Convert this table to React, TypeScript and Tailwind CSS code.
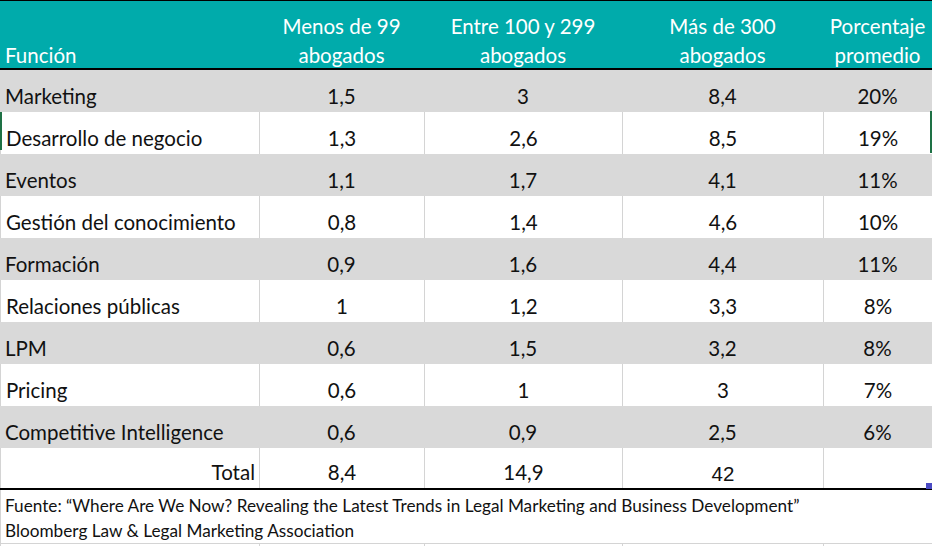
import React from 'react';

const rows = [
  ['Marketing', '1,5', '3', '8,4', '20%'],
  ['Desarrollo de negocio', '1,3', '2,6', '8,5', '19%'],
  ['Eventos', '1,1', '1,7', '4,1', '11%'],
  ['Gestión del conocimiento', '0,8', '1,4', '4,6', '10%'],
  ['Formación', '0,9', '1,6', '4,4', '11%'],
  ['Relaciones públicas', '1', '1,2', '3,3', '8%'],
  ['LPM', '0,6', '1,5', '3,2', '8%'],
  ['Pricing', '0,6', '1', '3', '7%'],
  ['Competitive Intelligence', '0,6', '0,9', '2,5', '6%'],
];

const cols = 'grid grid-cols-[259px_165px_198px_201px_109px]';

export default function App() {
  return (
    <div className="relative w-[932px] h-[546px] overflow-hidden bg-white text-[#111] font-['Lato','Open_Sans',sans-serif]">
      {/* header */}
      <div className={`${cols} h-[70px] bg-[#00abab] text-white text-[20.5px] leading-[29px] border-t border-black border-b-2 border-b-black`}>
        <div className="pl-[5px] pt-[40px]">Función</div>
        <div className="pt-[11px] text-center">Menos de 99<br />abogados</div>
        <div className="pt-[11px] text-center">Entre 100 y 299<br />abogados</div>
        <div className="pt-[11px] text-center">Más de 300<br />abogados</div>
        <div className="pt-[11px] text-center">Porcentaje<br />promedio</div>
      </div>

      {rows.map((r, i) => {
        const gray = i % 2 === 0;
        return (
          <div key={r[0]} className={`${cols} h-[42px] text-[20.5px] leading-[24px] ${gray ? 'bg-[#d9d9d9]' : 'bg-white'}`}>
            {r.map((c, j) => (
              <div
                key={j}
                className={`flex items-end pb-[4px] ${j === 0 ? 'justify-start pl-[5px]' : 'justify-center'} ${gray ? '' : 'border-l border-[#d4d4d4]'}`}
              >
                {c}
              </div>
            ))}
          </div>
        );
      })}

      {/* total */}
      <div className={`${cols} h-[42px] text-[20.5px] leading-[24px] border-b-2 border-black`}>
        <div className="flex items-end justify-end pr-[4px] pb-[4px] border-l border-[#d4d4d4]">Total</div>
        <div className="flex items-end justify-center pb-[4px] border-l border-[#d4d4d4]">8,4</div>
        <div className="flex items-end justify-center pb-[4px] border-l border-[#d4d4d4]">14,9</div>
        <div className="flex items-end justify-center pb-[2px] border-l border-[#d4d4d4] font-['Liberation_Sans',sans-serif] text-[20.5px]">42</div>
        <div className="border-l border-[#d4d4d4]"></div>
      </div>

      {/* footer */}
      <div className="h-[54px] border-l border-b border-[#d4d4d4] pl-[4px] pt-[3px] text-[17.2px] leading-[25px]">
        <div>
          Fuente: “Where Are We Now? Revealing the Latest Trends in Legal Marketing and Business Development”
        </div>
        <div>Bloomberg Law &amp; Legal Marketing Association</div>
      </div>
      <div className={`${cols} h-[10px]`}>
        <div className="border-l border-[#d4d4d4]"></div>
        <div className="border-l border-[#d4d4d4]"></div>
        <div className="border-l border-[#d4d4d4]"></div>
        <div className="border-l border-[#d4d4d4]"></div>
        <div className="border-l border-[#d4d4d4]"></div>
      </div>

      {/* selection markers */}
      <div className="absolute left-0 top-[112px] w-[2px] h-[38px] bg-[#1e7145]"></div>
      <div className="absolute right-0 top-[111px] w-[2px] h-[42px] bg-[#1e7145]"></div>
      <div className="absolute right-0 top-[483px] w-[6px] h-[6px] bg-[#4b4bc4]"></div>
    </div>
  );
}
